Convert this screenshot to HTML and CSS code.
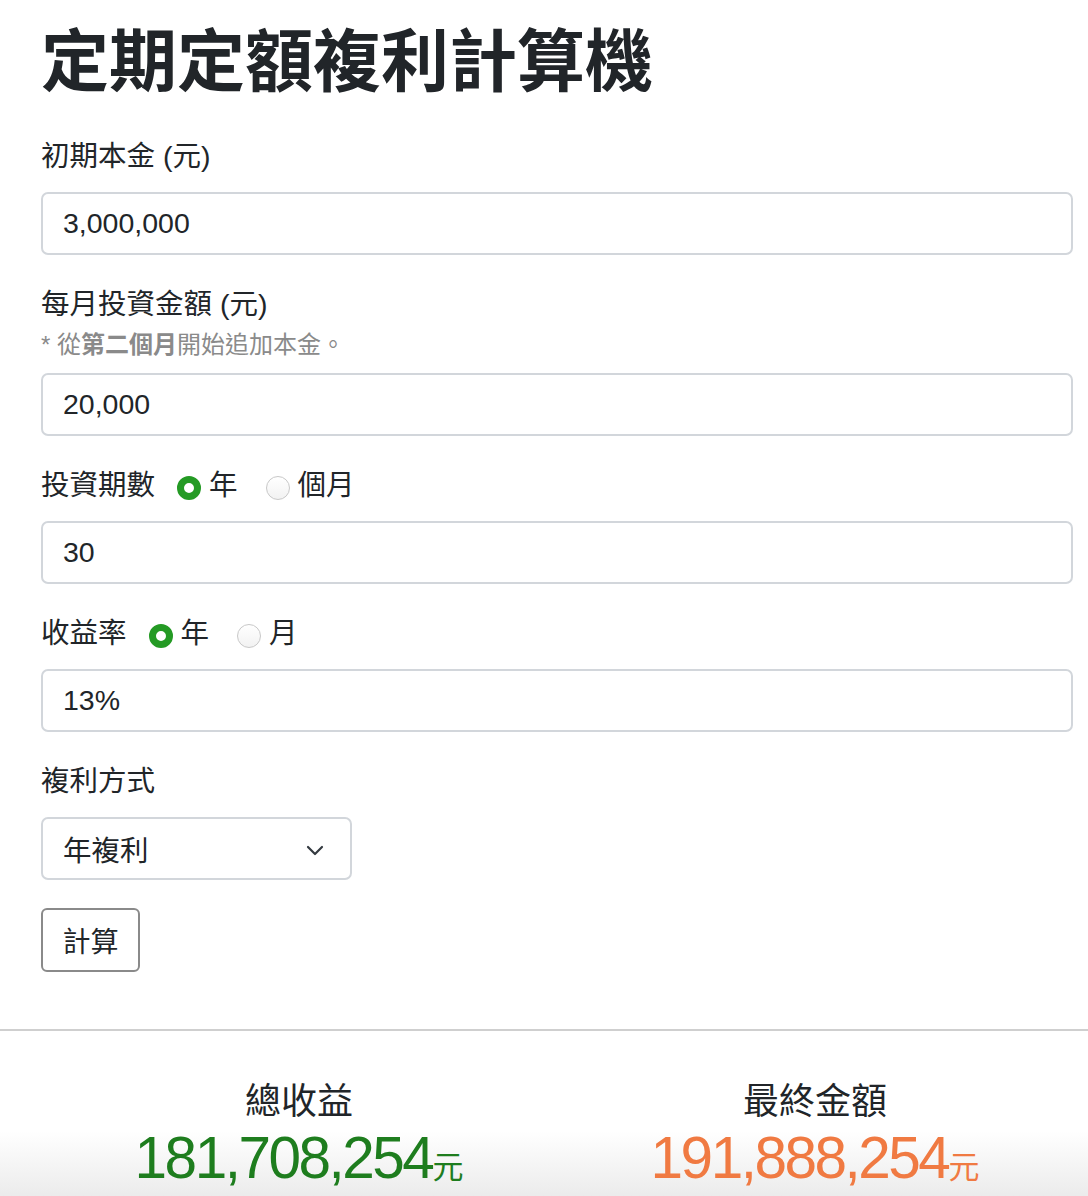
FILE: index.html
```html
<!DOCTYPE html>
<html lang="zh-Hant">
<head>
<meta charset="utf-8">
<title>定期定額複利計算機</title>
<link rel="stylesheet" href="styles.css">
</head>
<body>
<main class="page">
  <h1 class="title">定期定額複利計算機</h1>

  <div class="group">
    <label class="label">初期本金 (元)</label>
    <input class="field" type="text" value="3,000,000">
  </div>

  <div class="group">
    <label class="label">每月投資金額 (元)</label>
    <div class="hint">* 從<b>第二個月</b>開始追加本金。</div>
    <input class="field" type="text" value="20,000">
  </div>

  <div class="group">
    <div class="label row">
      <span>投資期數</span>
      <label class="opt"><input type="radio" name="period" checked><span>年</span></label>
      <label class="opt"><input type="radio" name="period"><span>個月</span></label>
    </div>
    <input class="field" type="text" value="30">
  </div>

  <div class="group">
    <div class="label row">
      <span>收益率</span>
      <label class="opt"><input type="radio" name="rate" checked><span>年</span></label>
      <label class="opt"><input type="radio" name="rate"><span>月</span></label>
    </div>
    <input class="field" type="text" value="13%">
  </div>

  <div class="group">
    <label class="label">複利方式</label>
    <div class="select">
      <span>年複利</span>
      <svg class="chev" width="18" height="12" viewBox="0 0 18 12"><path d="M2 3 L9 10 L16 3" fill="none" stroke="#343a40" stroke-width="2.2" stroke-linecap="round" stroke-linejoin="round"/></svg>
    </div>
  </div>

  <button class="btn" type="button">計算</button>
</main>

<hr class="divider">

<section class="results">
  <div class="result">
    <div class="result-label">總收益</div>
    <div class="result-value green">181,708,254<span class="unit">元</span></div>
  </div>
  <div class="result">
    <div class="result-label">最終金額</div>
    <div class="result-value orange">191,888,254<span class="unit">元</span></div>
  </div>
</section>
</body>
</html>
```

FILE: styles.css
```css
html, body {
  margin: 0;
  padding: 0;
  background: #fff;
}
body {
  font-family: "Liberation Sans", "Noto Sans CJK TC", sans-serif;
  color: #212529;
  font-size: 28px;
}
.page {
  padding: 21px 15px 0 41px;
}
.title {
  margin: 0 0 30px 0;
  font-size: 68px;
  line-height: 82px;
  font-weight: 700;
  color: #212529;
}
.group {
  margin-bottom: 26px;
}
.label {
  display: block;
  font-size: 28.5px;
  line-height: 42px;
  padding-top: 2px;
  margin-bottom: 15px;
  color: #212529;
}
.row {
  display: flex;
  align-items: center;
}
.opt {
  display: flex;
  align-items: center;
  margin-left: 22px;
}
.opt + .opt {
  margin-left: 28px;
}
.opt input {
  appearance: none;
  -webkit-appearance: none;
  width: 24px;
  height: 24px;
  margin: 6px 8px 0 0;
  border-radius: 50%;
  border: 1px solid #c8c8c8;
  background: linear-gradient(#fff, #f2f2f2);
  box-sizing: border-box;
}
.opt input:checked {
  border: 7.5px solid #249a24;
  background: #fff;
}
.hint {
  font-size: 24px;
  line-height: 36px;
  color: #8a8a8a;
  margin-top: -13px;
  margin-bottom: 10px;
}
.hint b {
  font-weight: 700;
}
.field {
  display: block;
  box-sizing: border-box;
  width: 100%;
  height: 63px;
  padding: 0 20px;
  border: 2px solid #d2d6db;
  border-radius: 7px;
  font-family: "Liberation Sans", "Noto Sans CJK TC", sans-serif;
  font-size: 28.5px;
  color: #212529;
  background: #fff;
  outline: none;
}
.select {
  box-sizing: border-box;
  width: 311px;
  height: 63px;
  border: 2px solid #d2d6db;
  border-radius: 7px;
  display: flex;
  align-items: center;
  justify-content: space-between;
  padding: 0 26px 0 20px;
  font-size: 28.5px;
}
.chev {
  margin-top: 2px;
}
.btn {
  display: block;
  box-sizing: border-box;
  margin-top: 28px;
  height: 64px;
  width: 99px;
  padding: 0;
  border: 2px solid #8a8a8a;
  border-radius: 6px;
  background: #fff;
  font-family: "Liberation Sans", "Noto Sans CJK TC", sans-serif;
  font-size: 28px;
  color: #212529;
}
.divider {
  margin: 57px 0 0 0;
  border: 0;
  border-top: 2px solid #cfcfcf;
  height: 0;
}
.results {
  display: grid;
  grid-template-columns: 1fr 1fr;
  padding: 44px 15px 40px 41px;
  background: linear-gradient(to bottom, #fff 0, #fff 100px, #f6f6f6 130px, #eaeaea 170px);
}
.result {
  text-align: center;
}
.result-label {
  font-size: 36px;
  line-height: 54px;
  color: #212529;
}
.result-value {
  font-size: 58.5px;
  line-height: 58px;
  letter-spacing: -2.5px;
}
.unit {
  font-size: 31px;
  letter-spacing: 0;
}
.green {
  color: #1e7d1e;
}
.orange {
  color: #f07a42;
}
```
